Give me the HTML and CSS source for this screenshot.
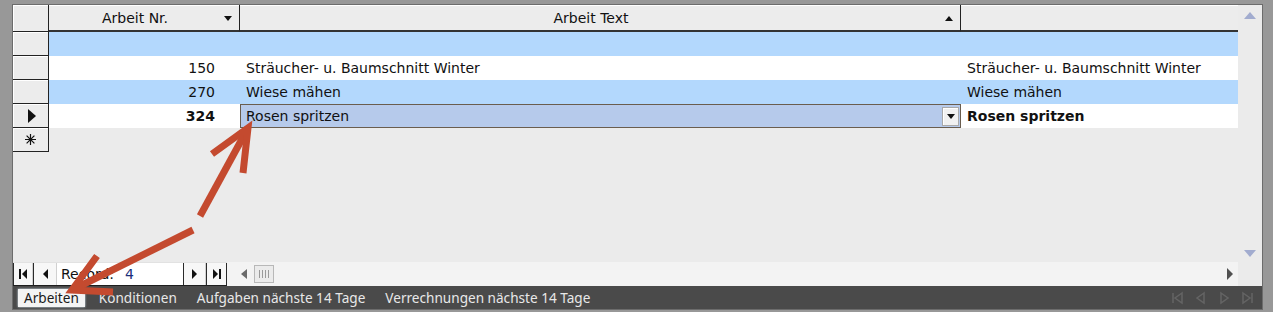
FILE: index.html
```html
<!DOCTYPE html>
<html>

<head>
    <meta name="viewport" content="width=device-width, initial-scale=1">
    <title>Arbeiten</title>
    <link rel="stylesheet" href="styles.css">
</head>

<body>
    <div class="window">
        <div class="sheet">
            <div class="body">
                <div class="grid">
                    <div class="row head">
                        <div class="sel"></div>
                        <div class="hcell c1"><span>Arbeit Nr.</span><i class="sort down"></i></div>
                        <div class="hcell c2"><span>Arbeit Text</span><i class="sort up"></i></div>
                        <div class="hcell c3"></div>
                    </div>

                    <div class="row blue">
                        <div class="sel"></div>
                        <div class="cell c1"></div>
                        <div class="cell c2"></div>
                        <div class="cell c3"></div>
                    </div>

                    <div class="row">
                        <div class="sel"></div>
                        <div class="cell c1">150</div>
                        <div class="cell c2">Sträucher- u. Baumschnitt Winter</div>
                        <div class="cell c3">Sträucher- u. Baumschnitt Winter</div>
                    </div>

                    <div class="row blue">
                        <div class="sel"></div>
                        <div class="cell c1">270</div>
                        <div class="cell c2">Wiese mähen</div>
                        <div class="cell c3">Wiese mähen</div>
                    </div>

                    <div class="row current">
                        <div class="sel"><i class="pointer"></i></div>
                        <div class="cell c1">324</div>
                        <div class="cell c2 combo">
                            <span class="combo-text">Rosen spritzen</span>
                            <span class="drop"><i class="caret"></i></span>
                        </div>
                        <div class="cell c3">Rosen spritzen</div>
                    </div>

                    <div class="row newrow">
                        <div class="sel">
                            <svg width="11" height="11" viewBox="0 0 11 11">
                                <g stroke="#111" stroke-width="1.2">
                                    <path d="M5.5 0v11M0 5.5h11M1.6 1.6l7.8 7.8M9.4 1.6l-7.8 7.8" />
                                </g>
                            </svg>
                        </div>
                    </div>
                </div>

                <div class="vscroll">
                    <i class="tri up"></i>
                    <i class="tri down"></i>
                </div>
            </div>

            <div class="navbar">
                <div class="recnav">
                    <span class="btn first"><i class="bar"></i><i class="left"></i></span>
                    <span class="btn prev"><i class="left"></i></span>
                    <span class="recbox">Record:<span class="recno">4</span></span>
                    <span class="btn next"><i class="right"></i></span>
                    <span class="btn last"><i class="right"></i><i class="bar"></i></span>
                </div>
                <div class="hscroll">
                    <i class="hleft"></i>
                    <span class="thumb"><i></i><i></i><i></i><i></i></span>
                    <i class="hright"></i>
                </div>
                <div class="corner"></div>
            </div>

            <div class="tabs">
                <span class="tab active">Arbeiten</span>
                <span class="tab">Konditionen</span>
                <span class="tab">Aufgaben nächste 14 Tage</span>
                <span class="tab">Verrechnungen nächste 14 Tage</span>
                <div class="tabnav">
                    <svg width="84" height="14" viewBox="0 0 84 14">
                        <g fill="none" stroke="#646464" stroke-width="1.5">
                            <path d="M3 2v10M12 2 5 7l7 5z" />
                            <path d="M34 2 27 7l7 5z" />
                            <path d="M51 2l7 5-7 5z" />
                            <path d="M73 2l7 5-7 5zM82 2v10" />
                        </g>
                    </svg>
                </div>
            </div>
        </div>

        <!-- annotation arrows drawn over the form -->
        <svg class="arrows" width="1273" height="312" viewBox="0 0 1273 312">
            <g fill="none" stroke="#c44a2f" stroke-width="7" stroke-linejoin="miter">
                <path d="M200 216 248 128" />
                <path d="M212 154 248 128 243 173" />
                <path d="M193 230 72 290" />
                <path d="M97 256 72 290 113 292" />
            </g>
        </svg>
    </div>
</body>

</html>
```

FILE: styles.css
```css
body {
    margin: 0;
    padding: 0;
    background-color: #989898;
    font-family: "DejaVu Sans", Verdana, sans-serif;
    font-size: 14px;
    color: #111;
}

.window {
    position: relative;
    width: 1273px;
    height: 312px;
    box-sizing: border-box;
    padding: 5px 11px 3px 13px;
    background-color: #989898;
    overflow: hidden;
}

.sheet {
    display: flex;
    flex-direction: column;
    background-color: #ebebeb;
    box-shadow: 0 0 0 1px #6c6c6c;
}

.body {
    display: flex;
    height: 257px;
}

.grid {
    width: 1225px;
    background-color: #ebebeb;
    box-shadow: inset 0 1px 0 #fff;
}

.row {
    display: flex;
    height: 24px;
}

.row.head {
    height: 27px;
}

.sel {
    width: 36px;
    flex: none;
    box-sizing: border-box;
    background-color: #ececec;
    border-right: 1px solid #222;
    border-bottom: 1px solid #222;
    box-shadow: inset 1px 1px 0 #fff;
    display: flex;
    align-items: center;
    justify-content: center;
}

.hcell {
    box-sizing: border-box;
    display: flex;
    align-items: center;
    justify-content: center;
    background-color: #ececec;
    border-bottom: 2px solid #333;
    border-right: 1px solid #222;
    box-shadow: inset 0 1px 0 #fff;
    position: relative;
    padding-right: 18px;
    color: #111;
}

.hcell.c3 {
    border-right: none;
}

.c1 {
    width: 191px;
}

.c2 {
    width: 721px;
}

.c3 {
    width: 277px;
}

.cell {
    box-sizing: border-box;
    display: flex;
    align-items: center;
    background-color: #fff;
    white-space: nowrap;
}

.cell.c1 {
    justify-content: flex-end;
    padding-right: 25px;
}

.cell.c2,
.cell.c3 {
    padding-left: 6px;
}

.row.blue .cell {
    background-color: #b3d8fd;
}

.row.current .cell {
    font-weight: bold;
}

.sort {
    position: absolute;
    right: 7px;
    top: 11px;
    width: 0;
    height: 0;
    border-left: 4px solid transparent;
    border-right: 4px solid transparent;
}

.sort.down {
    border-top: 5px solid #111;
}

.sort.up {
    border-bottom: 5px solid #111;
}

.pointer {
    width: 0;
    height: 0;
    border-top: 7px solid transparent;
    border-bottom: 7px solid transparent;
    border-left: 8px solid #111;
    margin-left: 2px;
}

.row.current .combo {
    font-weight: normal;
    background-color: #b6caeb;
    border: 1px solid #6a5d4e;
    padding-left: 5px;
    padding-right: 1px;
}

.combo-text {
    flex: 1;
}

.drop {
    width: 17px;
    height: 19px;
    box-sizing: border-box;
    background-color: #f1f1f1;
    border: 1px solid #a9a9a9;
    box-shadow: inset 1px 1px 0 #fff;
    display: flex;
    align-items: center;
    justify-content: center;
}

.caret {
    width: 0;
    height: 0;
    border-left: 4px solid transparent;
    border-right: 4px solid transparent;
    border-top: 5px solid #111;
}

.vscroll {
    width: 24px;
    background-color: #ebebeb;
    display: flex;
    flex-direction: column;
    align-items: center;
    justify-content: space-between;
    padding: 7px 0 5px;
    box-sizing: border-box;
}

.tri {
    width: 0;
    height: 0;
    border-left: 6px solid transparent;
    border-right: 6px solid transparent;
}

.tri.up {
    border-bottom: 7px solid #a2accf;
}

.tri.down {
    border-top: 7px solid #a2accf;
}

.navbar {
    display: flex;
    height: 24px;
    background-color: #f4f4f4;
    box-shadow: inset 0 1px 0 #e2e2e2;
}

.recnav {
    display: flex;
    height: 22px;
    margin-top: 1px;
    border-bottom: 1px solid #1e1e1e;
}

.btn {
    display: flex;
    align-items: center;
    justify-content: center;
    gap: 1px;
    box-sizing: border-box;
    height: 22px;
    background-color: #f7f7f7;
    border-left: 1px solid #2a2a2a;
    border-right: 1px solid #d0d0d0;
}

.btn.first {
    width: 20px;
}

.btn.prev {
    width: 24px;
}

.btn.next {
    width: 23px;
    border-left: 1px solid #2a2a2a;
}

.btn.last {
    width: 21px;
    border-right: 1px solid #2a2a2a;
}

.btn .bar {
    width: 2px;
    height: 10px;
    background-color: #111;
}

.btn .left {
    width: 0;
    height: 0;
    border-top: 5px solid transparent;
    border-bottom: 5px solid transparent;
    border-right: 5px solid #111;
}

.btn .right {
    width: 0;
    height: 0;
    border-top: 5px solid transparent;
    border-bottom: 5px solid transparent;
    border-left: 5px solid #111;
}

.recbox {
    width: 126px;
    box-sizing: border-box;
    background-color: #fff;
    padding-left: 4px;
    display: flex;
    align-items: center;
    white-space: nowrap;
}

.recno {
    margin-left: 11px;
    color: #1b2f7a;
}

.hscroll {
    flex: 1;
    display: flex;
    align-items: center;
    padding: 0 5px 0 14px;
    background-color: #f3f3f3;
}

.hleft {
    width: 0;
    height: 0;
    border-top: 5px solid transparent;
    border-bottom: 5px solid transparent;
    border-right: 6px solid #6a6a6a;
}

.thumb {
    width: 20px;
    height: 18px;
    margin-left: 7px;
    box-sizing: border-box;
    border: 1px solid #b8b8b8;
    background-color: #ebebeb;
    display: flex;
    align-items: center;
    justify-content: center;
    gap: 2px;
}

.thumb i {
    width: 1px;
    height: 8px;
    background-color: #9a9a9a;
}

.hright {
    margin-left: auto;
    width: 0;
    height: 0;
    border-top: 6px solid transparent;
    border-bottom: 6px solid transparent;
    border-left: 6px solid #505050;
}

.corner {
    width: 24px;
    background-color: #ebebeb;
}

.tabs {
    display: flex;
    align-items: center;
    gap: 8px;
    height: 23px;
    padding-left: 5px;
    background-color: #4a4a4a;
    font-family: "Noto Sans", "Open Sans", sans-serif;
    font-size: 13.6px;
    color: #e8e8e8;
}

.tab {
    height: 18px;
    line-height: 18px;
    padding: 0 6px;
    white-space: nowrap;
}

.tab.active {
    background-color: #f4f4f4;
    color: #1a1a1a;
    box-shadow: 0 0 2px #d8ecf7;
}

.tabnav {
    margin-left: auto;
    margin-right: 8px;
    display: flex;
    align-items: center;
}

.arrows {
    position: absolute;
    left: 0;
    top: 0;
    pointer-events: none;
}
```
